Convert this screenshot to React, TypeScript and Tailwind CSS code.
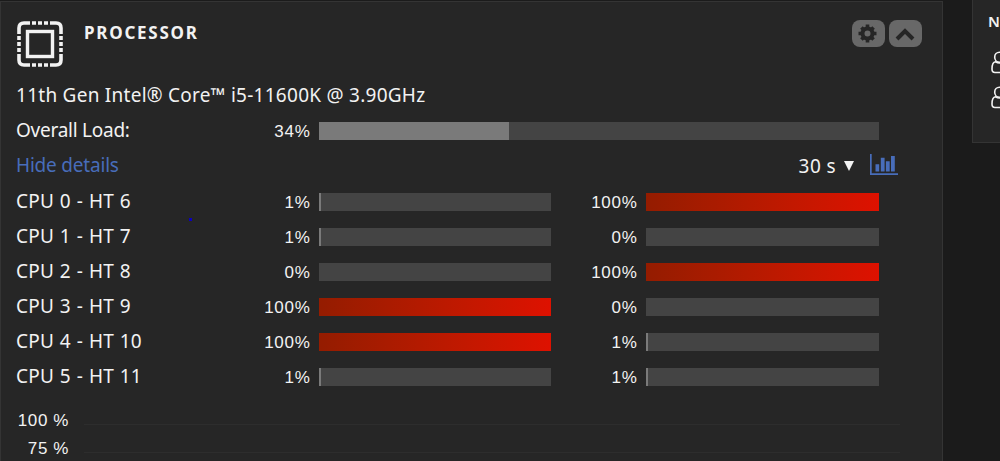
// types
interface CoreLoad {
  name: string
  loads: [number, number]
}

interface LoadBarProps {
  value: number
}

const cores: CoreLoad[] = [
  { name: 'CPU 0 - HT 6', loads: [1, 100] },
  { name: 'CPU 1 - HT 7', loads: [1, 0] },
  { name: 'CPU 2 - HT 8', loads: [0, 100] },
  { name: 'CPU 3 - HT 9', loads: [100, 0] },
  { name: 'CPU 4 - HT 10', loads: [100, 1] },
  { name: 'CPU 5 - HT 11', loads: [1, 1] },
]

const ChipIcon = () => (
  <svg width="46" height="46" viewBox="0 0 46 46" fill="none" stroke="#f2f2f2">
    <rect x="10.5" y="10.5" width="25" height="25" strokeWidth="3.4" />
    <g strokeWidth="3.6">
      <path d="M13 2H7Q2 2 2 7V13M33 2H39Q44 2 44 7V13M13 44H7Q2 44 2 39V33M33 44H39Q44 44 44 39V33" />
      <path d="M15 2H19M21 2H25M27 2H31M15 44H19M21 44H25M27 44H31" />
      <path d="M2 15V19M2 21V25M2 27V31M44 15V19M44 21V25M44 27V31" />
    </g>
  </svg>
)

const GearIcon = () => (
  <svg width="19" height="19" viewBox="0 0 19 19" fill="none" stroke="#262626" className="-ml-[3px]">
    <circle cx="9.5" cy="9.5" r="5" strokeWidth="4" />
    <path
      d="M9.5 .5V4M9.5 15V18.5M.5 9.5H4M15 9.5H18.5M3.4 3.4L5.6 5.6M13.4 13.4L15.6 15.6M15.6 3.4L13.4 5.6M5.6 13.4L3.4 15.6"
      strokeWidth="3.6"
    />
  </svg>
)

const ChartIcon = () => (
  <svg width="28" height="22" viewBox="0 0 28 22" fill="#486dba">
    <path d="M0 0H1.7V19.2H28V21H0ZM5.5 10.3H9.2V17.5H5.5ZM10.8 3.7H14.6V17.5H10.8ZM15.9 7.3H19.7V17.5H15.9ZM21 2H24.8V17.5H21Z" />
  </svg>
)

const UserIcon = () => (
  <svg width="22" height="24" viewBox="0 0 22 24" fill="none" stroke="#f2f2f2" strokeWidth="1.6" className="block">
    <ellipse cx="8.5" cy="6.2" rx="4.8" ry="5" />
    <path d="M4.5 10.7C2 11 1 14 1 18Q1 21.5 4 21.5H13Q16 21.5 16 18C16 14 15 11 12.5 10.7Q8.5 13 4.5 10.7Z" />
  </svg>
)

const LoadBar = ({ value }: LoadBarProps) => (
  <div className="flex h-[18px] w-full bg-[#444444]">
    <div
      className={value === 100 ? 'bg-linear-to-r from-[#941c00] to-[#de1100]' : 'bg-[#7a7a7a]'}
      style={{ width: `${value}%` }}
    />
  </div>
)

const Percent = ({ value }: LoadBarProps) => (
  <span className="pt-0.5 pr-[8.5px] text-right font-['Liberation_Sans',sans-serif] text-[17px] tracking-[0.7px]">
    {value}%
  </span>
)

const App = () => {
  return (
    <main className="flex h-[461px] items-start overflow-hidden bg-[#1b1b1b] pt-px font-['Noto_Sans',sans-serif] text-[19px] text-[#f2f2f2]">
      <section className="relative h-[480px] w-[943px] shrink-0 border border-[#343434] bg-[#262626] px-[15px]">
        <header className="flex h-[76px] items-start pt-[19px]">
          <div className="ml-px">
            <ChipIcon />
          </div>
          <h2 className="ml-[21px] text-[17px] leading-6 font-bold tracking-[1.75px]">PROCESSOR</h2>
          <div className="-mt-px mr-[5px] ml-auto flex gap-1">
            <button className="flex h-[27px] w-[33px] items-center justify-center rounded-[8px] bg-[#686868]">
              <GearIcon />
            </button>
            <button className="flex h-[27px] w-[33px] items-center justify-center rounded-[8px] bg-[#686868]">
              <svg width="20" height="14" viewBox="0 0 20 14" fill="none" stroke="#262626" strokeWidth="4" className="-ml-0.5">
                <path d="M2 12L10 4L18 12" />
              </svg>
            </button>
          </div>
        </header>
        <p className="h-[35px] leading-[35px] tracking-[0.26px] whitespace-nowrap">
          11th Gen Intel® Core™ i5-11600K @ 3.90GHz
        </p>
        <div className="grid h-[35px] grid-cols-[193px_110px_559.5px] items-center">
          <span className="tracking-[-0.25px]">Overall Load:</span>
          <Percent value={34} />
          <LoadBar value={34} />
        </div>
        <div className="flex h-9 items-center">
          <a className="-mt-0.5 tracking-[-0.2px] text-[#486dba]">Hide details</a>
          <span className="ml-auto tracking-[0.4px]">30 s</span>
          <svg width="10" height="12" viewBox="0 0 10 12" fill="#f2f2f2" className="ml-[8px]">
            <path d="M0 1H10L5 11Z" />
          </svg>
          <div className="-mt-0.5 mr-[29px] ml-[16px]">
            <ChartIcon />
          </div>
        </div>
        {cores.map(({ name, loads }) => (
          <div key={name} className="grid h-[35px] grid-cols-[193px_110px_232px_95px_232.5px] items-center">
            <span className="-mt-px tracking-[0.2px] [word-spacing:0.7px]">{name}</span>
            <Percent value={loads[0]} />
            <LoadBar value={loads[0]} />
            <Percent value={loads[1]} />
            <LoadBar value={loads[1]} />
          </div>
        ))}
        <div className="mt-3 font-['Liberation_Sans',sans-serif] text-[17px] tracking-[0.6px]">
          {[100, 75].map((tick) => (
            <div key={tick} className="flex h-7 items-center">
              <span className="w-[53px] pt-px text-right">{tick} %</span>
              <span className="mt-2 ml-[15px] h-px w-[816px] bg-[#2d2d2d]" />
            </div>
          ))}
        </div>
        <span className="absolute top-[216px] left-[188px] size-[3px] bg-[#0c00bd]" />
      </section>
      <aside className="-mt-px ml-[29px] h-[143px] w-[300px] shrink-0 border border-t-0 border-[#343434] bg-[#262626] pl-[15px]">
        <h2 className="mt-[9px] h-6 text-[15px] leading-6 font-semibold">N</h2>
        <div className="mt-[18px] ml-[3px] flex flex-col gap-[11px]">
          <UserIcon />
          <UserIcon />
        </div>
      </aside>
    </main>
  )
}

export default App
